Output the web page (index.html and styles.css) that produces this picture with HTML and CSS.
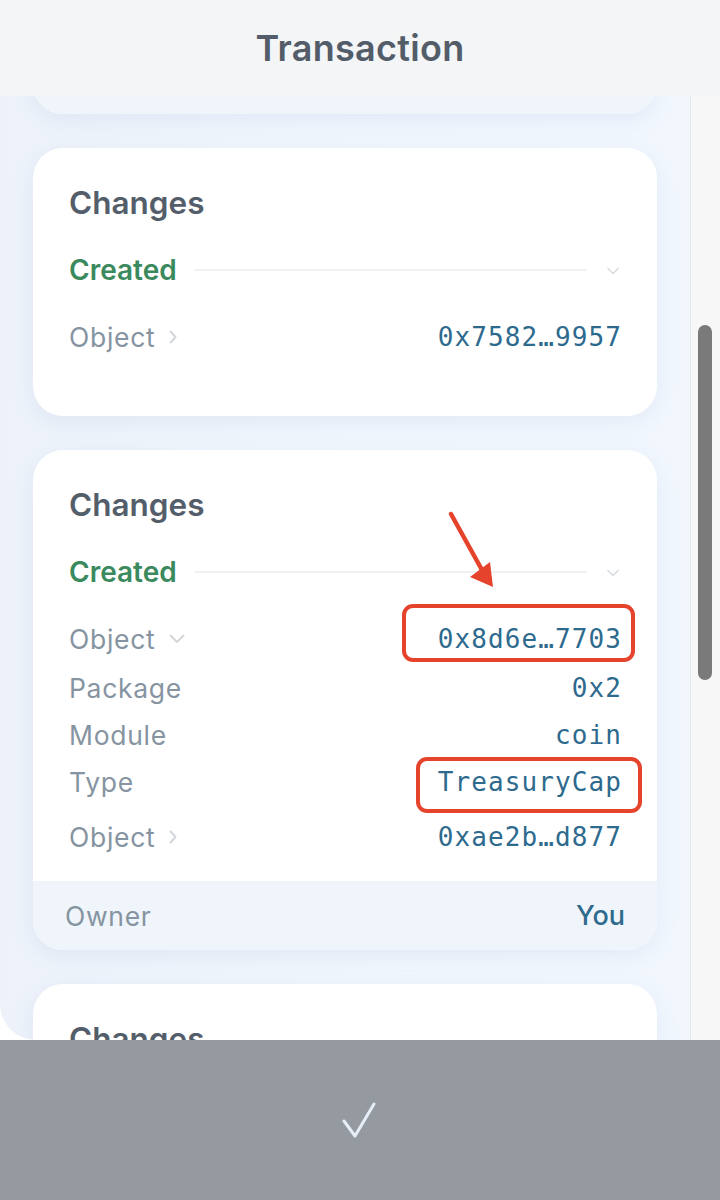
FILE: index.html
```html
<!DOCTYPE html>
<html lang="en">
<head>
<meta charset="utf-8">
<title>Transaction</title>
<link rel="stylesheet" href="styles.css">
</head>
<body>
<div class="app">
  <header class="header"><h1 class="title">Transaction</h1></header>
  <div class="main">
    <div class="scroll">
      <div class="cards">
        <section class="card card-prev">
          <div class="card-footer"></div>
        </section>

        <section class="card">
          <div class="card-body">
            <h2 class="card-title">Changes</h2>
            <div class="status-row">
              <span class="status">Created</span>
              <span class="rule"></span>
              <svg class="chev-down-sm" viewBox="0 0 12 8" width="12" height="8"><path d="M1 1.5 6 6.5 11 1.5" fill="none" stroke="currentColor" stroke-width="1.6" stroke-linecap="round" stroke-linejoin="round"/></svg>
            </div>
            <div class="row row-obj">
              <span class="label">Object <svg class="chev-right" viewBox="0 0 8 14" width="8" height="14"><path d="M1.5 1.5 6.5 7 1.5 12.5" fill="none" stroke="currentColor" stroke-width="2" stroke-linecap="round" stroke-linejoin="round"/></svg></span>
              <span class="value">0x7582…9957</span>
            </div>
          </div>
        </section>

        <section class="card">
          <div class="card-body body-long">
            <h2 class="card-title">Changes</h2>
            <div class="status-row">
              <span class="status">Created</span>
              <span class="rule"></span>
              <svg class="chev-down-sm" viewBox="0 0 12 8" width="12" height="8"><path d="M1 1.5 6 6.5 11 1.5" fill="none" stroke="currentColor" stroke-width="1.6" stroke-linecap="round" stroke-linejoin="round"/></svg>
            </div>
            <div class="row row-obj">
              <span class="label">Object <svg class="chev-down" viewBox="0 0 16 10" width="16" height="10"><path d="M1.5 1.5 8 8 14.5 1.5" fill="none" stroke="currentColor" stroke-width="2" stroke-linecap="round" stroke-linejoin="round"/></svg></span>
              <span class="value">0x8d6e…7703</span>
            </div>
            <div class="sublist">
              <div class="row"><span class="label">Package</span><span class="value">0x2</span></div>
              <div class="row"><span class="label">Module</span><span class="value">coin</span></div>
              <div class="row"><span class="label">Type</span><span class="value">TreasuryCap</span></div>
            </div>
            <div class="row row-obj row-last">
              <span class="label">Object <svg class="chev-right" viewBox="0 0 8 14" width="8" height="14"><path d="M1.5 1.5 6.5 7 1.5 12.5" fill="none" stroke="currentColor" stroke-width="2" stroke-linecap="round" stroke-linejoin="round"/></svg></span>
              <span class="value">0xae2b…d877</span>
            </div>
          </div>
          <div class="card-footer owner">
            <span class="owner-label">Owner</span>
            <span class="owner-value">You</span>
          </div>
        </section>

        <section class="card">
          <div class="card-body">
            <h2 class="card-title">Changes</h2>
          </div>
        </section>
      </div>
    </div>
    <div class="track"><div class="thumb"></div></div>
  </div>
  <footer class="bottom">
    <svg class="check" viewBox="0 0 36 36" width="36" height="36"><path d="M3 19 14 34 33 2" fill="none" stroke="currentColor" stroke-width="3" stroke-linecap="round" stroke-linejoin="round"/></svg>
  </footer>
</div>

<svg class="annot" viewBox="0 0 720 1200" width="720" height="1200">
  <line x1="451" y1="514" x2="482" y2="570" stroke="#e6432c" stroke-width="4.5" stroke-linecap="round"/>
  <polygon points="493,587 470,577 490,562" fill="#e6432c"/>
  <rect x="404" y="606" width="229" height="54" rx="9" fill="none" stroke="#e6432c" stroke-width="4"/>
  <rect x="418" y="759" width="222" height="52" rx="9" fill="none" stroke="#e6432c" stroke-width="4"/>
</svg>
</body>
</html>
```

FILE: styles.css
```css
* { box-sizing: border-box; }
html, body { margin: 0; padding: 0; }
body {
  width: 720px;
  height: 1200px;
  overflow: hidden;
  background: #ffffff;
  font-family: Inter, "Noto Sans", "Liberation Sans", sans-serif;
  position: relative;
}
.app {
  display: flex;
  flex-direction: column;
  height: 1200px;
}
.header {
  height: 96px;
  flex: none;
  background: #f3f5f7;
  display: flex;
  align-items: center;
  justify-content: center;
}
.title {
  margin: 0;
  font-family: Inter, "Liberation Sans", sans-serif;
  font-weight: 600;
  font-size: 36px;
  color: #535d69;
  letter-spacing: 0.3px;
}
.main {
  flex: 1;
  display: flex;
  min-height: 0;
}
.scroll {
  flex: 1;
  overflow: hidden;
  background: linear-gradient(90deg, #edf2fa 0%, #f1f6fd 50%, #f2f7fe 100%);
  border-bottom-left-radius: 36px;
}
.cards {
  display: flex;
  flex-direction: column;
  gap: 34px;
  padding: 0 33px;
  margin-top: -167px;
}
.card {
  background: #ffffff;
  border-radius: 30px;
  overflow: hidden;
  box-shadow: 0 6px 22px rgba(120, 150, 200, 0.12);
}
.card-prev { height: 185px; display: flex; flex-direction: column; justify-content: flex-end; }
.card-prev .card-footer { height: 69px; }
.card-body {
  padding: 38px 36px 62px;
}
.body-long { padding-bottom: 27px; }
.card-title {
  margin: 0;
  font-size: 31.5px;
  line-height: 34px;
  font-weight: 600;
  color: #545e6a;
}
.status-row {
  margin-top: 33px;
  height: 34px;
  display: flex;
  align-items: center;
}
.status {
  font-size: 28px;
  font-weight: 600;
  color: #3a8a5e;
}
.rule {
  flex: 1;
  height: 2px;
  background: #eff1f3;
  margin: 0 20px 0 17px;
}
.chev-down-sm { color: #d8dce0; margin-right: 2px; margin-top: 2px; }
.row {
  display: flex;
  align-items: center;
  justify-content: space-between;
  height: 34px;
}
.row-obj { margin-top: 33px; }
.row-last { margin-top: 21px; }
.label {
  font-size: 26.5px;
  letter-spacing: 0.7px;
  color: #8694a1;
  display: flex;
  align-items: center;
  gap: 14px;
}
.chev-right { color: #d3d7db; }
.chev-down { color: #d3d7db; }
.value {
  font-family: "DejaVu Sans Mono", "Liberation Mono", monospace;
  font-size: 26px;
  letter-spacing: 1.1px;
  margin-right: -1px;
  color: #2d6a8e;
}
.sublist {
  display: flex;
  flex-direction: column;
  gap: 13px;
  margin-top: 15px;
}
.card-footer {
  background: #f0f5fb;
}
.owner {
  height: 69px;
  display: flex;
  align-items: center;
  justify-content: space-between;
  padding: 0 32px;
}
.owner-label { font-size: 26.5px; letter-spacing: 0.7px; color: #8694a1; }
.owner-value { font-size: 27px; color: #2d6a8e; font-weight: 500; }
.track {
  width: 30px;
  flex: none;
  background: #f7f7f7;
  border-left: 1px solid #e6e7ea;
  padding: 229px 0 0 7px;
}
.thumb {
  width: 14px;
  height: 355px;
  border-radius: 7px;
  background: #7a7a7a;
}
.bottom {
  height: 160px;
  flex: none;
  background: #959aa1;
  display: flex;
  align-items: center;
  justify-content: center;
}
.check { color: #e6eef7; margin-left: -3px; }
.annot {
  position: absolute;
  top: 0;
  left: 0;
  pointer-events: none;
}
```
